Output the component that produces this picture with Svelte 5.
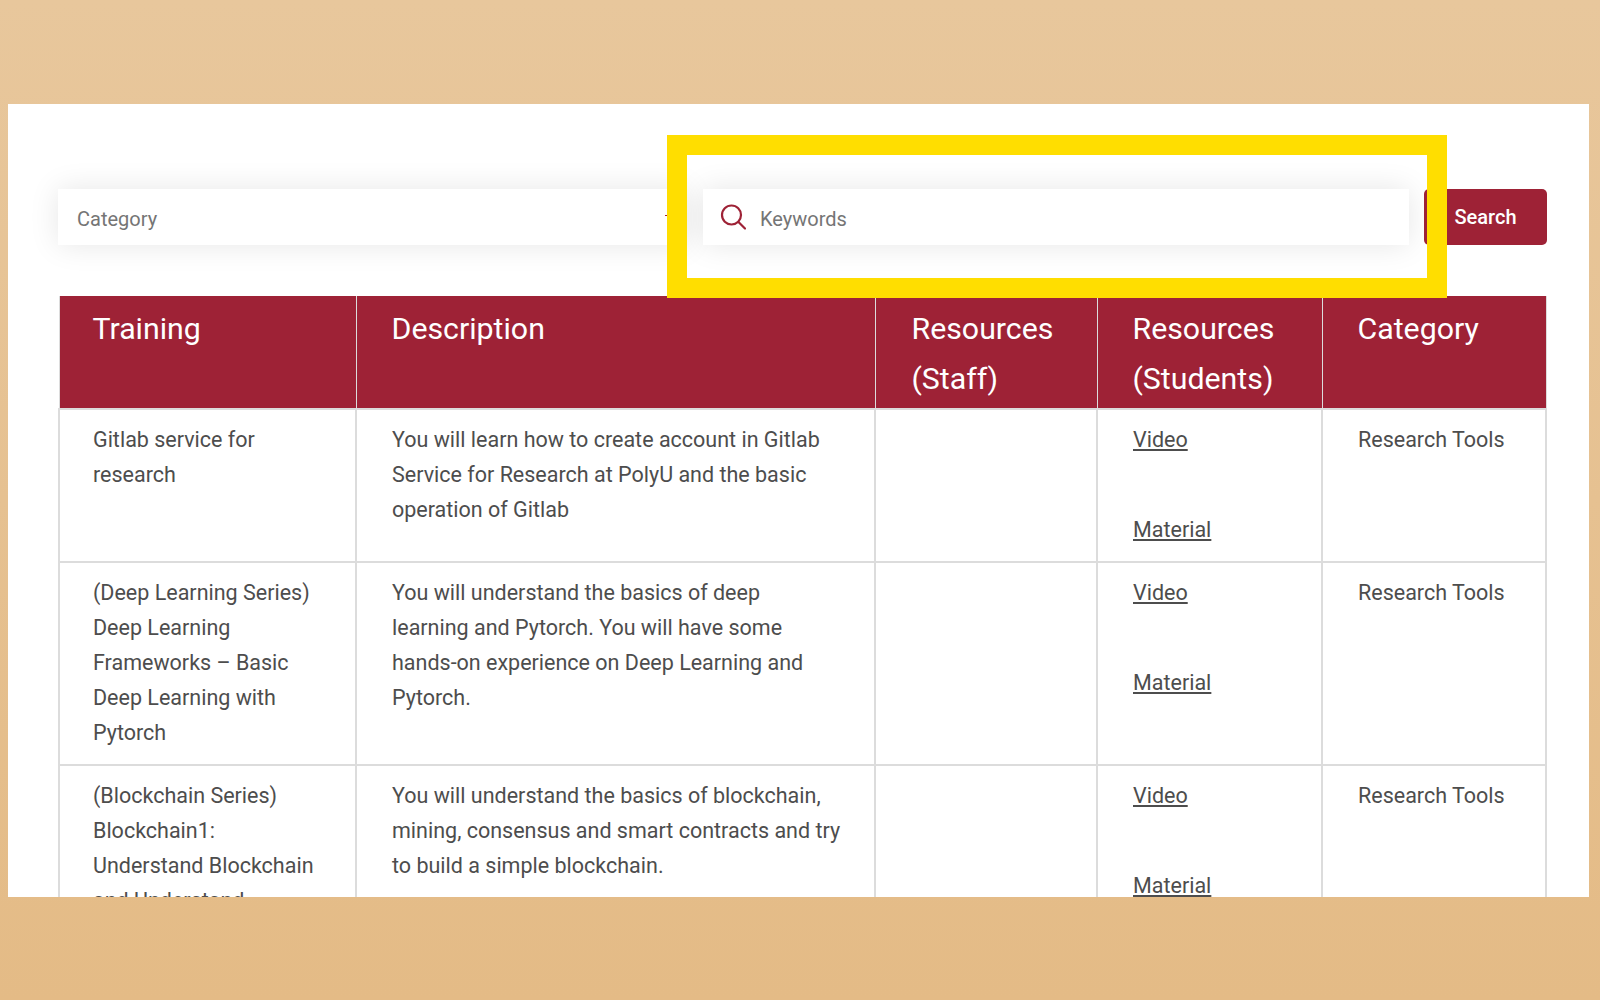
<script>
  const rows = [
    {
      training: ["Gitlab service for", "research"],
      description: ["You will learn how to create account in Gitlab", "Service for Research at PolyU and the basic", "operation of Gitlab"],
      category: "Research Tools"
    },
    {
      training: ["(Deep Learning Series)", "Deep Learning", "Frameworks – Basic", "Deep Learning with", "Pytorch"],
      description: ["You will understand the basics of deep", "learning and Pytorch. You will have some", "hands-on experience on Deep Learning and", "Pytorch."],
      category: "Research Tools"
    },
    {
      training: ["(Blockchain Series)", "Blockchain1:", "Understand Blockchain", "and Understand"],
      description: ["You will understand the basics of blockchain,", "mining, consensus and smart contracts and try", "to build a simple blockchain."],
      category: "Research Tools"
    }
  ];
</script>

<main>
  <div class="panel">
    <div class="filters">
      <div class="field select">
        <span>Category</span>
        <i class="arrow"></i>
      </div>
      <div class="field keywords">
        <svg width="26" height="26" viewBox="0 0 26 26" fill="none" stroke="#9e2236" stroke-width="2.2">
          <circle cx="11.5" cy="11" r="9.5" />
          <path d="M18.5 18 L25 24.5" stroke-linecap="round" />
        </svg>
        <span>Keywords</span>
      </div>
      <button class="search">Search</button>
    </div>

    <table>
      <thead>
        <tr>
          <th class="c1">Training</th>
          <th class="c2">Description</th>
          <th class="c3">Resources (Staff)</th>
          <th class="c4">Resources (Students)</th>
          <th class="c5">Category</th>
        </tr>
      </thead>
      <tbody>
        {#each rows as row}
          <tr>
            <td class="first">
              {#each row.training as line}
                <span class="line">{line}</span>
              {/each}
            </td>
            <td>
              {#each row.description as line}
                <span class="line">{line}</span>
              {/each}
            </td>
            <td></td>
            <td>
              <p><a href="#video">Video</a></p>
              <p><a href="#material">Material</a></p>
            </td>
            <td>{row.category}</td>
          </tr>
        {/each}
      </tbody>
    </table>

    <div class="highlight"></div>
  </div>
</main>

<style>
  :global(body) {
    margin: 0;
    background: linear-gradient(#e8c79c, #e4bb86);
    font-family: Roboto, "Liberation Sans", sans-serif;
  }

  main {
    height: 1000px;
    padding: 104px 11px 103px 8px;
    box-sizing: border-box;
  }

  .panel {
    position: relative;
    height: 793px;
    background: #fff;
    overflow: hidden;
    padding: 85px 42px 0 50px;
    box-sizing: border-box;
  }

  .filters {
    display: flex;
    height: 56px;
    margin-bottom: 51px;
  }

  .field {
    display: flex;
    align-items: center;
    background: #fff;
    box-shadow: 0 0 30px rgba(0, 0, 0, 0.1);
    color: #757575;
    font-size: 20px;
  }

  .field span {
    padding-top: 3px;
  }

  .select {
    width: 629px;
    padding: 0 19px;
    box-sizing: border-box;
    justify-content: space-between;
  }

  .arrow {
    width: 3px;
    height: 1px;
    margin-bottom: 4px;
    background: #9e2236;
  }

  .keywords {
    width: 706px;
    margin-left: 16px;
    padding-left: 17px;
    box-sizing: border-box;
    gap: 14px;
  }

  .search {
    width: 123px;
    margin-left: 15px;
    padding: 0;
    border: none;
    border-radius: 5px;
    background: #9e2236;
    color: #fff;
    font-family: inherit;
    font-size: 20px;
    font-weight: 500;
  }

  table {
    width: 1487px;
    border-collapse: collapse;
    table-layout: fixed;
    font-size: 21.5px;
    line-height: 35px;
    color: #4d4d4d;
  }

  th {
    height: 112px;
    padding: 8px 35px 4px;
    background: #9e2236;
    border: 1px solid #dcdcdc;
    border-top: none;
    color: #fff;
    font-size: 30.3px;
    font-weight: 450;
    line-height: 50px;
    text-align: left;
    vertical-align: top;
    box-sizing: border-box;
  }

  .c1 { width: 297px; padding-left: 33px; }
  .c2 { width: 519px; }
  .c3 { width: 222px; padding-left: 36px; }
  .c4 { width: 225px; }
  .c5 { width: 224px; }

  td {
    padding: 12px 35px 14px;
    border: 2px solid #dcdcdc;
    vertical-align: top;
  }

  td.first {
    padding-left: 33px;
  }

  .line {
    display: block;
    white-space: nowrap;
  }

  p {
    margin: 0 0 55px;
  }

  p:last-child {
    margin-bottom: 0;
  }

  a {
    color: #4d4d4d;
  }

  .highlight {
    position: absolute;
    left: 659px;
    top: 31px;
    width: 780px;
    height: 163px;
    border: 20px solid #ffde00;
    box-sizing: border-box;
  }
</style>
